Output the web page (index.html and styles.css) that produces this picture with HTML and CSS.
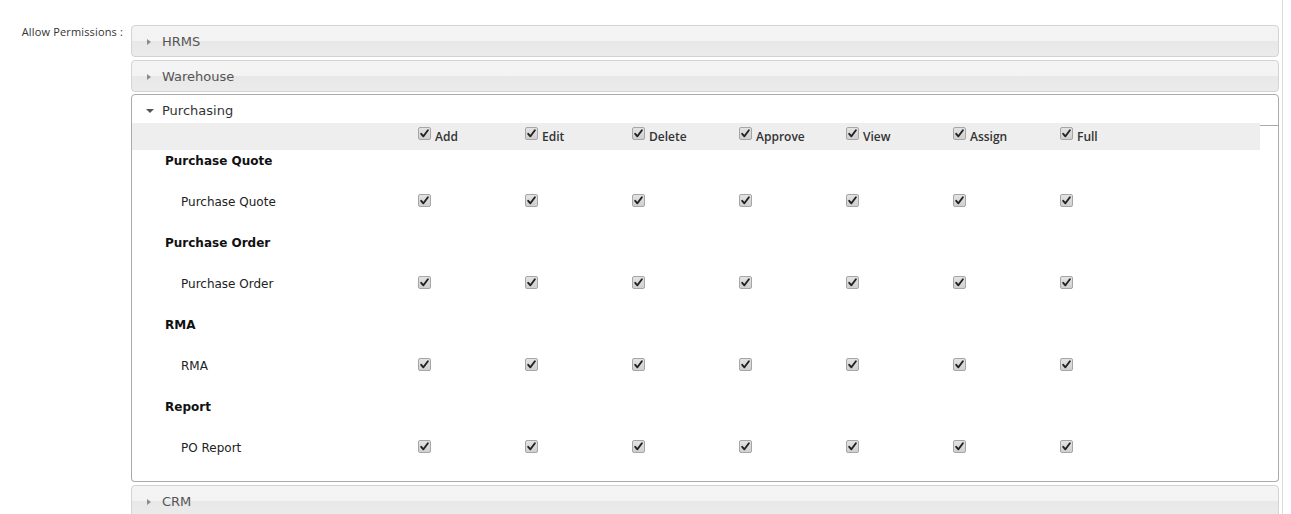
FILE: index.html
```html
<!DOCTYPE html>
<html lang="en">
<head>
<meta charset="utf-8">
<title>Allow Permissions</title>
<link rel="stylesheet" href="styles.css">
</head>
<body>
<div class="page">
  <div class="form-row">
    <label class="field-label">Allow Permissions :</label>
    <div class="accordion">
      <div class="acc-header"><span class="arrow-right"></span><span class="acc-title">HRMS</span></div>
      <div class="acc-header"><span class="arrow-right"></span><span class="acc-title">Warehouse</span></div>
      <div class="acc-header active"><span class="arrow-down"></span><span class="acc-title">Purchasing</span></div>
      <div class="acc-content">
        <div class="perm-grid">
          <div class="row row-head">
            <div class="cell"></div>
            <div class="cell"><input type="checkbox" class="cb" checked><span class="col-label">Add</span></div>
            <div class="cell"><input type="checkbox" class="cb" checked><span class="col-label">Edit</span></div>
            <div class="cell"><input type="checkbox" class="cb" checked><span class="col-label">Delete</span></div>
            <div class="cell"><input type="checkbox" class="cb" checked><span class="col-label">Approve</span></div>
            <div class="cell"><input type="checkbox" class="cb" checked><span class="col-label">View</span></div>
            <div class="cell"><input type="checkbox" class="cb" checked><span class="col-label">Assign</span></div>
            <div class="cell"><input type="checkbox" class="cb" checked><span class="col-label">Full</span></div>
          </div>

          <div class="row row-group"><div class="group-label">Purchase Quote</div></div>
          <div class="row row-item">
            <div class="item-label">Purchase Quote</div>
            <div class="cell"><input type="checkbox" class="cb" checked></div>
            <div class="cell"><input type="checkbox" class="cb" checked></div>
            <div class="cell"><input type="checkbox" class="cb" checked></div>
            <div class="cell"><input type="checkbox" class="cb" checked></div>
            <div class="cell"><input type="checkbox" class="cb" checked></div>
            <div class="cell"><input type="checkbox" class="cb" checked></div>
            <div class="cell"><input type="checkbox" class="cb" checked></div>
          </div>

          <div class="row row-group"><div class="group-label">Purchase Order</div></div>
          <div class="row row-item">
            <div class="item-label">Purchase Order</div>
            <div class="cell"><input type="checkbox" class="cb" checked></div>
            <div class="cell"><input type="checkbox" class="cb" checked></div>
            <div class="cell"><input type="checkbox" class="cb" checked></div>
            <div class="cell"><input type="checkbox" class="cb" checked></div>
            <div class="cell"><input type="checkbox" class="cb" checked></div>
            <div class="cell"><input type="checkbox" class="cb" checked></div>
            <div class="cell"><input type="checkbox" class="cb" checked></div>
          </div>

          <div class="row row-group"><div class="group-label">RMA</div></div>
          <div class="row row-item">
            <div class="item-label">RMA</div>
            <div class="cell"><input type="checkbox" class="cb" checked></div>
            <div class="cell"><input type="checkbox" class="cb" checked></div>
            <div class="cell"><input type="checkbox" class="cb" checked></div>
            <div class="cell"><input type="checkbox" class="cb" checked></div>
            <div class="cell"><input type="checkbox" class="cb" checked></div>
            <div class="cell"><input type="checkbox" class="cb" checked></div>
            <div class="cell"><input type="checkbox" class="cb" checked></div>
          </div>

          <div class="row row-group"><div class="group-label">Report</div></div>
          <div class="row row-item">
            <div class="item-label">PO Report</div>
            <div class="cell"><input type="checkbox" class="cb" checked></div>
            <div class="cell"><input type="checkbox" class="cb" checked></div>
            <div class="cell"><input type="checkbox" class="cb" checked></div>
            <div class="cell"><input type="checkbox" class="cb" checked></div>
            <div class="cell"><input type="checkbox" class="cb" checked></div>
            <div class="cell"><input type="checkbox" class="cb" checked></div>
            <div class="cell"><input type="checkbox" class="cb" checked></div>
          </div>
        </div>
      </div>
      <div class="acc-header"><span class="arrow-right"></span><span class="acc-title">CRM</span></div>
    </div>
  </div>
</div>
</body>
</html>
```

FILE: styles.css
```css
html, body {
  margin: 0;
  padding: 0;
  background: #fff;
}

body {
  font-family: "DejaVu Sans", Verdana, sans-serif;
  overflow: hidden;
}

.page {
  width: 1282px;
  height: 514px;
  border-right: 1px solid #dcdcdc;
  box-sizing: content-box;
}

.form-row {
  display: flex;
  align-items: flex-start;
  padding-top: 25px;
}

.field-label {
  width: 123px;
  flex: none;
  text-align: right;
  font-family: "Open Sans", sans-serif;
  font-size: 11px;
  line-height: 13px;
  letter-spacing: 0.15px;
  color: #333;
}

.accordion {
  margin-left: 8px;
  width: 1148px;
}

.acc-header {
  display: flex;
  align-items: center;
  height: 29px;
  padding-top: 1px;
  padding-left: 15px;
  margin-top: 3px;
  border: 1px solid #d3d3d3;
  border-radius: 4px;
  background: linear-gradient(#f4f4f4 0, #f3f3f3 50%, #e8e8e8 50%, #ebebeb 100%);
  color: #555;
  font-size: 13px;
}

.acc-header:first-child {
  margin-top: 0;
}

.acc-header.active {
  background: #fff;
  border-color: #aaa;
  border-radius: 4px 4px 0 0;
  color: #333;
  margin-top: 2px;
}

.acc-title {
  margin-left: 11px;
  line-height: 16px;
}

.arrow-right {
  width: 0;
  height: 0;
  border-top: 3.5px solid transparent;
  border-bottom: 3.5px solid transparent;
  border-left: 4px solid #8c8c8c;
}

.arrow-down {
  width: 0;
  height: 0;
  border-left: 4px solid transparent;
  border-right: 4px solid transparent;
  border-top: 4px solid #555;
  margin-left: -1px;
  margin-right: -3px;
}

.acc-content {
  margin-top: -3px;
  border: 1px solid #aaa;
  border-top: 0;
  border-radius: 0 0 4px 4px;
  padding-bottom: 3px;
}

.perm-grid {
  width: 1128px;
}

.row {
  display: grid;
  grid-template-columns: 282px repeat(6, 107px) 1fr;
}

.row-head {
  height: 27px;
  background: #eeeeee;
}

.row-group {
  height: 22px;
  align-items: center;
}

.row-item {
  height: 60px;
  align-items: center;
}

.cell {
  display: flex;
  align-items: flex-start;
}

.row-item .cell {
  align-items: center;
  margin-top: -3px;
}

.cb {
  appearance: none;
  -webkit-appearance: none;
  width: 13px;
  height: 13px;
  margin: 0 0 0 4px;
  padding: 0;
  border: 0;
  flex: none;
  background: url("data:image/svg+xml;utf8,<svg xmlns='http://www.w3.org/2000/svg' width='13' height='13' viewBox='0 0 13 13'><defs><linearGradient id='g' x1='0' y1='0' x2='0' y2='1'><stop offset='0' stop-color='%23e4e4e4'/><stop offset='1' stop-color='%23cfcfcf'/></linearGradient></defs><rect x='0.5' y='0.5' width='12' height='12' rx='1.5' fill='url(%23g)' stroke='%23a6a6a6'/><path d='M3.2 6.8 L5.4 9.3 L9.9 3.2' fill='none' stroke='%23222' stroke-width='1.9' stroke-linecap='round' stroke-linejoin='round'/></svg>") no-repeat center / 13px 13px;
}

.row-head .cb {
  margin-top: 4px;
}

.col-label {
  margin-left: 4px;
  margin-top: 6px;
  font-family: "Open Sans", sans-serif;
  font-weight: 600;
  font-size: 12px;
  line-height: 16px;
  color: #333;
}

.group-label {
  padding-left: 33px;
  font-weight: bold;
  font-size: 12px;
  line-height: 22px;
  color: #111;
  white-space: nowrap;
}

.item-label {
  padding-left: 49px;
  font-size: 12px;
  line-height: 16px;
  color: #222;
  white-space: nowrap;
}
```
